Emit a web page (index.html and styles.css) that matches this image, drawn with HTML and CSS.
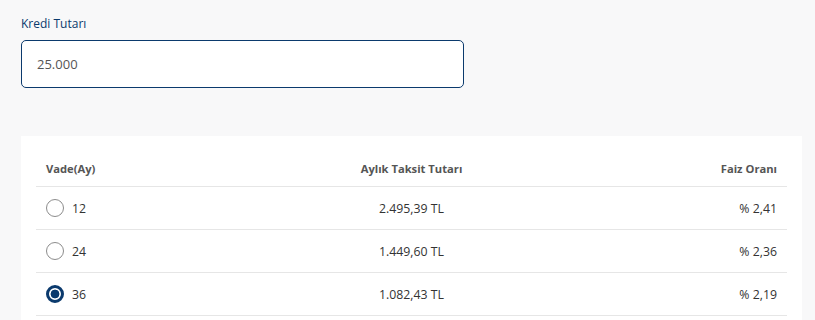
FILE: index.html
```html
<!DOCTYPE html>
<html lang="tr">
<head>
<meta charset="utf-8">
<title>Kredi</title>
<link rel="stylesheet" href="styles.css">
</head>
<body>
<div class="page">
  <label class="field-label" for="amount">Kredi Tutarı</label>
  <div class="input-box" id="amount">25.000</div>

  <div class="card">
    <div class="table">
      <div class="row head">
        <div class="c1">Vade(Ay)</div>
        <div class="c2">Aylık Taksit Tutarı</div>
        <div class="c3">Faiz Oranı</div>
      </div>
      <div class="row">
        <div class="c1"><span class="radio"></span>12</div>
        <div class="c2">2.495,39 TL</div>
        <div class="c3">% 2,41</div>
      </div>
      <div class="row">
        <div class="c1"><span class="radio"></span>24</div>
        <div class="c2">1.449,60 TL</div>
        <div class="c3">% 2,36</div>
      </div>
      <div class="row">
        <div class="c1"><span class="radio checked"></span>36</div>
        <div class="c2">1.082,43 TL</div>
        <div class="c3">% 2,19</div>
      </div>
    </div>
  </div>
</div>
</body>
</html>
```

FILE: styles.css
```css
html, body {
  margin: 0;
  padding: 0;
  background: #f8f8f9;
}
body {
  font-family: "Open Sans", "Noto Sans", sans-serif;
  color: #333;
}
.page {
  padding: 16px 13px 0 21px;
}
.field-label {
  display: block;
  font-size: 12px;
  line-height: 16px;
  color: #0b3a6d;
}
.input-box {
  margin-top: 8px;
  height: 46px;
  border: 1px solid #0b3a6d;
  border-radius: 5px;
  background: #fff;
  box-sizing: content-box;
  padding: 0 0 0 15px;
  width: 426px;
  display: flex;
  align-items: center;
  font-size: 13px;
  color: #555;
}
.card {
  margin-top: 48px;
  width: 751px;
  background: #fff;
  padding: 15px;
}
.row {
  display: grid;
  grid-template-columns: 1fr 1fr 1fr;
  align-items: center;
  height: 42px;
  border-bottom: 1px solid #e6e6e6;
  font-size: 12.3px;
  color: #333;
}
.row.head {
  height: 35px;
  align-items: start;
  font-size: 11.2px;
  font-weight: 700;
  color: #555;
}
.row.head > div {
  padding-top: 10px;
  line-height: 16px;
}
.c1 {
  padding-left: 10px;
  display: flex;
  align-items: center;
}
.c2 {
  text-align: center;
}
.c3 {
  text-align: right;
  padding-right: 10px;
}
.radio {
  width: 16px;
  height: 16px;
  border: 1px solid #8c8c8c;
  border-radius: 50%;
  margin-right: 8px;
  box-sizing: content-box;
  background: #fff;
  flex: none;
}
.radio.checked {
  width: 12px;
  height: 12px;
  border: 3px solid #0b3a6d;
  background: radial-gradient(circle, #0b3a6d 0 4.1px, #fff 4.7px);
}
```
